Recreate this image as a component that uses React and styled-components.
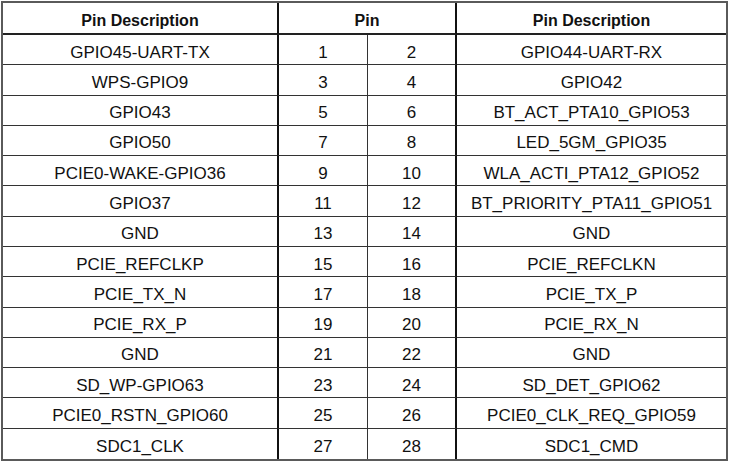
import styled, { createGlobalStyle } from "styled-components";

const Global = createGlobalStyle`
  body {
    margin: 0;
    background: #fff;
    font-family: "Liberation Sans", Arial, sans-serif;
    color: #111;
  }
`;

const Page = styled.div`
  padding: 1px 0 0 1px;
`;

const Grid = styled.div`
  box-sizing: border-box;
  width: 727px;
  height: 460px;
  border: 2px solid #5a5a5a;
  display: grid;
  grid-template-columns: 274px 90px 90px 1fr;
  grid-template-rows: 32px repeat(14, 1fr);
`;

const Cell = styled.div`
  box-sizing: border-box;
  display: flex;
  align-items: center;
  justify-content: center;
  padding-top: 6px;
  font-size: ${(p) => (p.$head ? "16px" : "17px")};
  font-weight: ${(p) => (p.$head ? 700 : 400)};
  border-bottom: ${(p) =>
    p.$last ? "none" : p.$head ? "2px solid #222" : "1px solid #333"};
  border-left: ${(p) =>
    p.$pin === "a" ? "2px solid #111" : p.$pin === "b" ? "1px solid #333" : "none"};
  border-right: ${(p) => (p.$pin === "b" || p.$span ? "2px solid #111" : "none")};
  grid-column: ${(p) => (p.$span ? "span 2" : "auto")};
  ${(p) => p.$span && "border-left: 2px solid #111;"}
  white-space: nowrap;
`;

const rows = [
  ["GPIO45-UART-TX", 1, 2, "GPIO44-UART-RX"],
  ["WPS-GPIO9", 3, 4, "GPIO42"],
  ["GPIO43", 5, 6, "BT_ACT_PTA10_GPIO53"],
  ["GPIO50", 7, 8, "LED_5GM_GPIO35"],
  ["PCIE0-WAKE-GPIO36", 9, 10, "WLA_ACTI_PTA12_GPIO52"],
  ["GPIO37", 11, 12, "BT_PRIORITY_PTA11_GPIO51"],
  ["GND", 13, 14, "GND"],
  ["PCIE_REFCLKP", 15, 16, "PCIE_REFCLKN"],
  ["PCIE_TX_N", 17, 18, "PCIE_TX_P"],
  ["PCIE_RX_P", 19, 20, "PCIE_RX_N"],
  ["GND", 21, 22, "GND"],
  ["SD_WP-GPIO63", 23, 24, "SD_DET_GPIO62"],
  ["PCIE0_RSTN_GPIO60", 25, 26, "PCIE0_CLK_REQ_GPIO59"],
  ["SDC1_CLK", 27, 28, "SDC1_CMD"],
];

export default function App() {
  return (
    <Page>
      <Global />
      <Grid>
        <Cell $head>Pin Description</Cell>
        <Cell $head $span>Pin</Cell>
        <Cell $head>Pin Description</Cell>
        {rows.map(([l, a, b, r], i) => {
          const last = i === rows.length - 1;
          return [
            <Cell key={`l${i}`} $last={last}>{l}</Cell>,
            <Cell key={`a${i}`} $pin="a" $last={last}>{a}</Cell>,
            <Cell key={`b${i}`} $pin="b" $last={last}>{b}</Cell>,
            <Cell key={`r${i}`} $last={last}>{r}</Cell>,
          ];
        })}
      </Grid>
    </Page>
  );
}
